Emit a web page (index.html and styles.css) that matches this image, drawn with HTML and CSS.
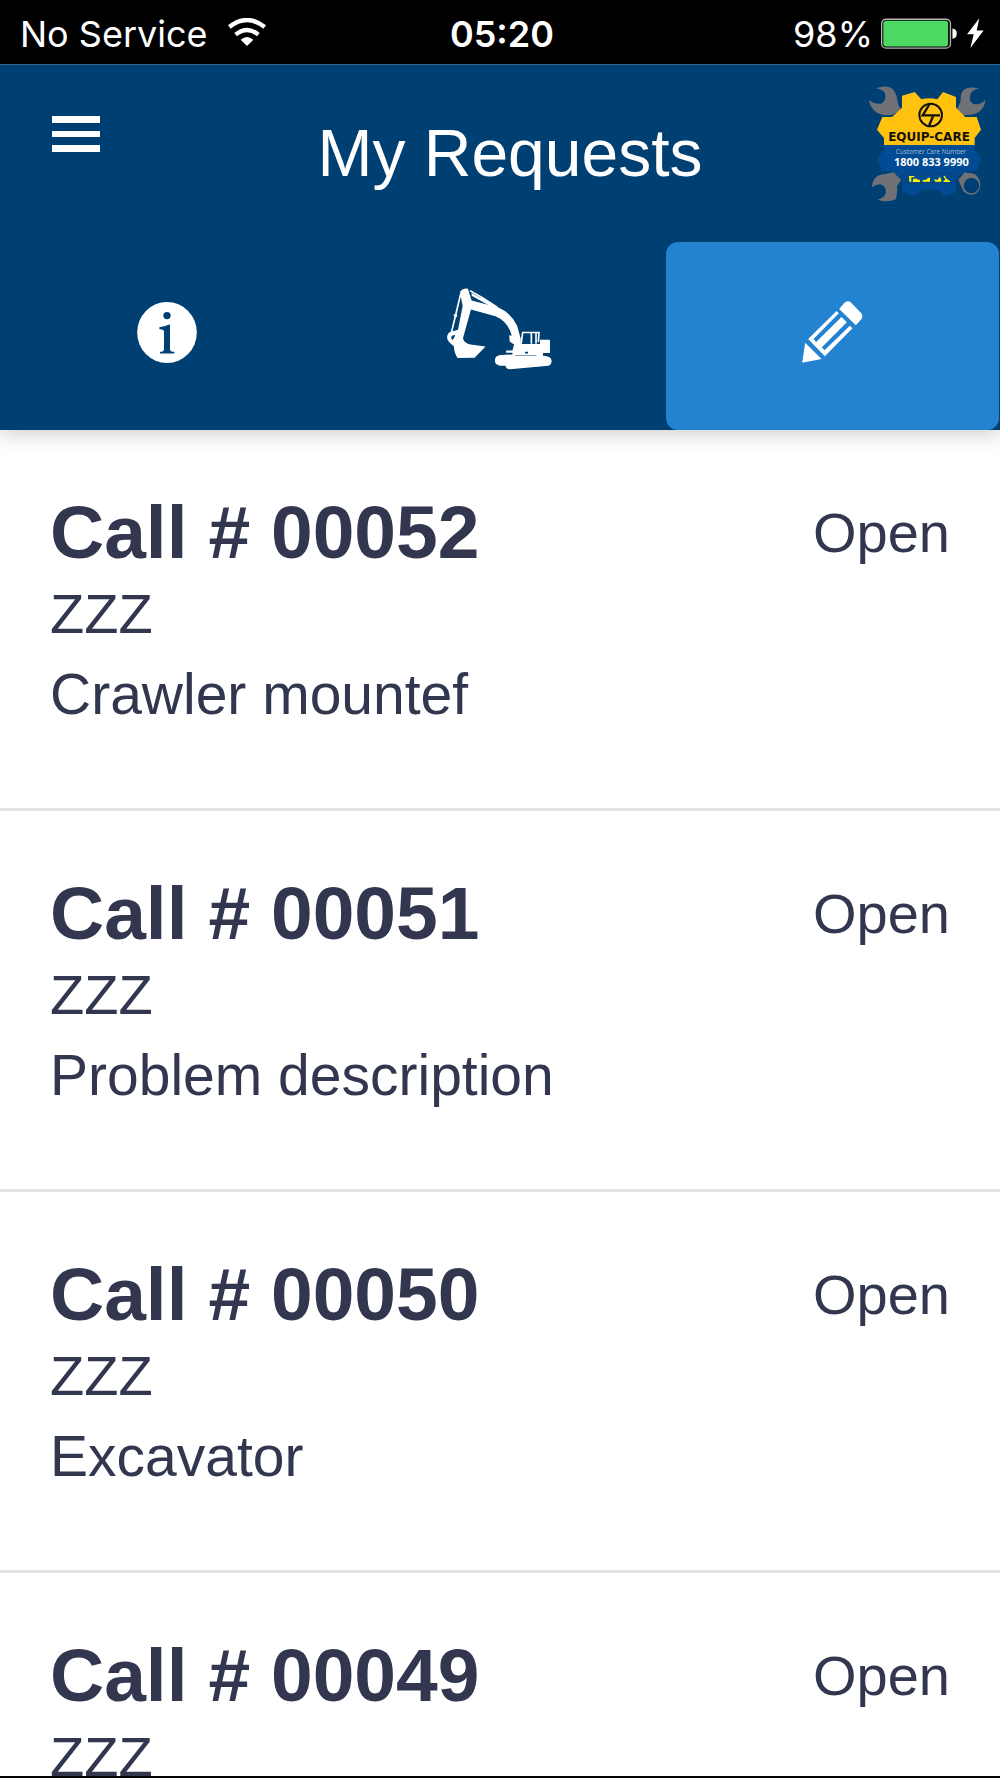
FILE: index.html
```html
<!DOCTYPE html>
<html lang="en">
<head>
<meta charset="utf-8">
<meta name="viewport" content="width=device-width, initial-scale=1">
<title>My Requests</title>
<link rel="stylesheet" href="styles.css">
</head>
<body>
<div class="screen">
  <div class="status-bar">
    <div class="status-left">
      <span>No Service</span>
      <svg class="wifi" viewBox="0 0 114 84" aria-hidden="true">
        <g fill="none" stroke="#fff" stroke-width="13">
          <path d="M4 27Q57-15 110 27"/>
          <path d="M23 50Q57 22 91 50"/>
        </g>
        <path fill="#fff" d="M38 65Q57 49 76 65L57 84Z"/>
      </svg>
    </div>
    <time class="clock">05:20</time>
    <div class="status-right">
      <span>98%</span>
      <svg class="battery" viewBox="0 0 310 92" aria-hidden="true">
        <rect x="2" y="3" width="207" height="87" rx="13" fill="none" stroke="#b5b5b5" stroke-width="4"/>
        <rect x="7" y="8" width="195" height="77" rx="8" fill="#4cd964"/>
        <path fill="#fff" d="M215 31Q228 33 228 46Q228 60 215 62Z"/>
        <path fill="#fff" d="M296 0L259 48H279L269 90L309 37H288Z"/>
      </svg>
    </div>
  </div>

  <header class="app-header">
    <div class="title-bar">
      <button class="menu-button" type="button" aria-label="Menu">
        <svg class="menu-icon" viewBox="0 0 48 36" aria-hidden="true"><path fill="#fff" d="M0 0h48v7H0zM0 15h48v6H0zM0 29h48v7H0z"/></svg>
      </button>
      <h1 class="title">My Requests</h1>
      <svg class="logo" viewBox="24 28 357 351" role="img" aria-label="Equip-Care">
        <g fill="#707176">
          <path d="M48 38Q82 25 100 42Q112 58 115 88L124 104L96 118Q55 121 40 102Q27 86 28 73Q43 87 63 84Q80 75 75 53Q69 42 48 38Z"/>
          <path d="M357 38Q323 30 309 45Q300 57 302 77L290 103L310 118Q350 120 363 103Q376 88 376 73Q362 89 339 85Q325 75 332 54Q338 43 357 38Z"/>
          <path d="M36 335Q38 297 73 296L101 290L124 313L111 331Q113 357 107 371Q81 382 53 372Q73 368 78 350Q79 332 61 326Q49 325 36 335Z"/>
          <path fill-rule="evenodd" d="M314 290L344 295Q361 307 361 330Q356 357 333 357Q311 355 306 337L295 312ZM334 307A23 23 0 1 0 335 307Z"/>
        </g>
        <path fill="#004b93" d="M72 208H344V222L363 248L352 286H316L288 309V350L252 361L235 342H180L165 361L127 350V313L100 286H65L52 248L72 222Z"/>
        <path fill="#ffc20e" d="M72 208V187L51 162L67 124H96L126 96V60L164 49L184 71Q207 64 232 71L249 49L288 64V96L316 124L350 124L363 162L344 187V208Z"/>
        <g fill="none" stroke="#15120b">
          <circle cx="212" cy="118" r="34" stroke-width="6"/>
          <path d="M209 85L188 119H209M204 119H240M220 119L207 151" stroke-width="7"/>
        </g>
        <text class="logo-brand" x="207" y="196" text-anchor="middle">EQUIP-CARE</text>
        <text class="logo-caption" x="213" y="236" text-anchor="middle">Customer Care Number</text>
        <text class="logo-phone" x="214" y="270" text-anchor="middle">1800 833 9990</text>
        <rect x="131" y="294" width="154" height="30" rx="12" fill="none" stroke="#153f78" stroke-width="3"/>
        <path fill="#fff200" d="M147 301H163V305H154V318H148ZM160 309H172V312H180V319H158ZM188 318V313H196L206 306H210V318ZM222 311L233 313L238 305H241L244 314V318H226ZM250 300H254L261 311L270 316V319H251V314H257Z"/>
      </svg>
    </div>

    <nav class="tabs" aria-label="Sections">
      <a class="tab" href="#info" aria-label="Information">
        <svg class="icon-info" viewBox="0 0 180 184" aria-hidden="true">
          <ellipse cx="90" cy="92" rx="90" ry="92" fill="#fff"/>
          <g fill="#003f72">
            <circle cx="90" cy="41" r="11"/>
            <path d="M67 76Q82 75 97 68H99V143Q99 150 112 150V155H69V150Q81 150 81 143V90Q81 81 67 82Z"/>
          </g>
        </svg>
      </a>
      <a class="tab" href="#equipment" aria-label="Equipment">
        <svg class="icon-excavator" viewBox="43 34 320 250" aria-hidden="true">
          <g fill="none" stroke="#fff" stroke-width="5">
            <path d="M86 55L70 122L58 172M114 45L154 68L196 95M268 205L273 171H322L320 200M299 171V205M313 172V205"/>
          </g>
          <path fill="#fff" d="M84 50Q90 37 108 39L119 75L200 96Q239 113 256 151L267 190V206H325V193H355V233H334V241Q361 242 360 258Q359 270 350 271L235 282Q222 280 221 271H205Q188 268 189 255Q190 240 207 239L242 237V232H223V225H242L247 207L234 199L232 179L240 181Q229 138 191 122L117 102L93 188Q96 203 116 207L161 213L128 247L77 248Q68 238 65 212Q46 198 45 186Q46 169 60 168L78 163L92 91ZM62 179Q53 187 62 194L70 179Z"/>
          <path fill="#fff" d="M66 115L76 117L74 125L65 122ZM150 64L160 70L156 76L146 72ZM119 52L200 96L180 94L119 60Z"/>
          <path fill="#003f72" d="M280 229H289V234H280ZM250 240H314V242H250Z"/>
        </svg>
      </a>
      <a class="tab tab-active" href="#requests" aria-label="My requests" aria-current="page">
        <svg class="icon-pencil" viewBox="458 213 182 186" aria-hidden="true">
          <g fill="#fff">
            <path d="M569 237L584 220Q594 209 605 218L634 248Q642 257 636 267L619 286Z"/>
            <path d="M467 338L516 387L458 398Z"/>
            <path d="M476 327L561 243L568 250L492 327L500 336L576 261L592 277L517 352L525 361L601 287L609 295L526 379Z"/>
          </g>
        </svg>
      </a>
    </nav>
  </header>

  <main class="request-list">
    <article class="request">
      <div class="details">
        <h2 class="call">Call # 00052</h2>
        <p class="line">ZZZ</p>
        <p class="line description">Crawler mountef</p>
      </div>
      <span class="line">Open</span>
    </article>
    <article class="request">
      <div class="details">
        <h2 class="call">Call # 00051</h2>
        <p class="line">ZZZ</p>
        <p class="line description">Problem description</p>
      </div>
      <span class="line">Open</span>
    </article>
    <article class="request">
      <div class="details">
        <h2 class="call">Call # 00050</h2>
        <p class="line">ZZZ</p>
        <p class="line description">Excavator</p>
      </div>
      <span class="line">Open</span>
    </article>
    <article class="request">
      <div class="details">
        <h2 class="call">Call # 00049</h2>
        <p class="line">ZZZ</p>
      </div>
      <span class="line">Open</span>
    </article>
  </main>
</div>
</body>
</html>
```
FILE: styles.css
```css
* {
  box-sizing: border-box;
}

body {
  margin: 0;
  background: #fff;
  color: #32364e;
  font-family: "Liberation Sans", Arial, sans-serif;
}

h1, h2, p {
  margin: 0;
}

svg {
  display: block;
  flex: none;
}

.screen {
  display: flex;
  flex-direction: column;
  height: 100vh;
  border-bottom: 2px solid #000;
}

/* Device status bar */
.status-bar {
  display: grid;
  grid-template-columns: 1fr auto 1fr;
  align-items: center;
  flex: none;
  height: 64px;
  padding: 4px 16px 0 20px;
  background: #000;
  color: #fff;
  font-family: Inter, sans-serif;
  font-size: 36px;
  line-height: 44px;
}

.status-left,
.status-right {
  display: flex;
  align-items: center;
  gap: 20px;
}

.status-right {
  justify-content: flex-end;
  gap: 8px;
}

.clock {
  font-weight: 600;
}

.wifi {
  width: 38px;
  height: 28px;
  margin-bottom: 4px;
}

.battery {
  width: 103px;
  height: 31px;
  margin-bottom: 2px;
}

/* Header */
.app-header {
  position: relative;
  flex: none;
  border-top: 1px solid #33658e;
  background: #003f72;
  box-shadow: 0 4px 20px rgba(0, 0, 0, 0.2);
}

.title-bar {
  display: grid;
  grid-template-columns: 1fr auto 1fr;
  align-items: start;
  height: 177px;
  padding: 20px 13px 0 33px;
}

.menu-button {
  justify-self: start;
  padding: 31px 19px;
  border: 0;
  background: none;
}

.menu-icon {
  width: 48px;
  height: 36px;
}

.title {
  padding-top: 30px;
  color: #fff;
  font-size: 66px;
  font-weight: 400;
  line-height: 76px;
}

.logo {
  justify-self: end;
  width: 119px;
  height: 117px;
}

.logo-brand {
  font: 700 36px "DejaVu Sans", sans-serif;
  fill: #15120b;
}

.logo-caption {
  font: 19px "Open Sans", sans-serif;
  fill: #a4c0dc;
}

.logo-phone {
  font: 700 33px "Open Sans", sans-serif;
  fill: #fff;
}

.tabs {
  display: grid;
  grid-template-columns: repeat(3, 1fr);
  padding-right: 1px;
}

.tab {
  display: flex;
  align-items: center;
  justify-content: center;
  height: 188px;
  padding-bottom: 8px;
  border-radius: 12px;
}

.tab-active {
  background: #2383d1;
}

.icon-info {
  width: 60px;
  height: 61px;
}

.icon-excavator {
  width: 107px;
  height: 83px;
  margin-bottom: 8px;
}

.icon-pencil {
  width: 61px;
  height: 62px;
}

/* Requests */
.request-list {
  flex: 1;
  min-height: 0;
  overflow-y: auto;
  scrollbar-width: none;
}

.request {
  display: flex;
  justify-content: space-between;
  padding: 62px 50px 73px;
  border-bottom: 3px solid #e1e3e3;
}

.call {
  font-size: 75px;
  font-weight: 700;
  line-height: 81px;
}

.line {
  font-size: 56px;
  line-height: 81px;
}

.description {
  font-size: 57px;
}
```
